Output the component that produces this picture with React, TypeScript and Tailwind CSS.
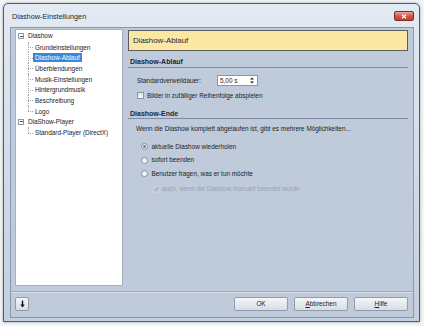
import React from 'react';

type TreeItem = {
  label: string;
  root?: boolean;
  selected?: boolean;
  line?: 'mid' | 'last' | 'none';
};

const treeItems: TreeItem[] = [
  { label: 'Diashow', root: true },
  { label: 'Grundeinstellungen', line: 'mid' },
  { label: 'Diashow-Ablauf', selected: true, line: 'mid' },
  { label: 'Überblendungen', line: 'mid' },
  { label: 'Musik-Einstellungen', line: 'mid' },
  { label: 'Hintergrundmusik', line: 'mid' },
  { label: 'Beschreibung', line: 'mid' },
  { label: 'Logo', line: 'last' },
  { label: 'DiaShow-Player', root: true },
  { label: 'Standard-Player (DirectX)', line: 'last' },
];

function TreeRow({ item }: { item: TreeItem }) {
  if (item.root) {
    return (
      <div className="relative flex h-[10.7px] items-center pl-[2px]">
        <span className="relative flex h-[6px] w-[6px] items-center justify-center border border-[#8f9aa8] bg-white">
          <span className="h-[1px] w-[3px] bg-[#3b4a5e]" />
        </span>
        <span className="ml-[4px] text-[6.4px] leading-[8px] text-[#1a1a1a]">{item.label}</span>
      </div>
    );
  }
  return (
    <div className="relative flex h-[10.7px] items-center pl-[17px]">
      <div
        className={
          item.line === 'last'
            ? 'absolute left-[12px] top-0 h-1/2 border-l border-dotted border-[#a2a2a2]'
            : 'absolute left-[12px] top-0 h-full border-l border-dotted border-[#a2a2a2]'
        }
      />
      <div className="absolute left-[12px] top-1/2 w-[5px] border-t border-dotted border-[#a2a2a2]" />
      <span
        className={
          item.selected
            ? 'bg-[#3c87d9] px-[2px] text-[6.4px] leading-[9px] text-white'
            : 'px-[2px] text-[6.4px] leading-[9px] text-[#1a1a1a]'
        }
      >
        {item.label}
      </span>
    </div>
  );
}

function Radio({ checked, label }: { checked?: boolean; label: string }) {
  return (
    <div className="flex h-[13.5px] items-center pl-[12.5px]">
      <span className="flex h-[7px] w-[7px] items-center justify-center rounded-full border border-[#8792a4] bg-linear-to-b from-[#e8ecf1] to-[#fbfcfd]">
        {checked ? <span className="h-[3px] w-[3px] rounded-full bg-[#5b76a0]" /> : null}
      </span>
      <span className="ml-[4px] text-[6.4px] leading-[8px] text-[#222]">{label}</span>
    </div>
  );
}

function Button({ children }: { children: React.ReactNode }) {
  return (
    <div className="flex h-[14px] w-[54px] items-center justify-center rounded-[2px] border border-[#8e9cb0] bg-linear-to-b from-[#f4f5f7] to-[#d9dde3] text-[6.4px] leading-[8px] text-[#1a1a1a]">
      {children}
    </div>
  );
}

export default function App() {
  return (
    <div className="h-[326px] w-[424px] bg-[#f4f5f7] pl-[3px] pt-[3px] font-['Liberation_Sans',Arial,sans-serif]">
      <div className="flex h-[319px] w-[417px] flex-col rounded-t-[5px] border border-[#4f5b6c] bg-linear-to-b from-[#e3eaf3] to-[#c3cfde] shadow-[0_0_3px_rgba(0,0,0,0.35)]">
        {/* title bar */}
        <div className="flex h-[23px] items-start">
          <span className="mt-[8px] pl-[8px] text-[7.3px] leading-[9px] text-[#1c2738]">Diashow-Einstellungen</span>
          <div className="ml-auto mr-[5px] mt-[7px] flex h-[10px] w-[20px] items-center justify-center rounded-[2px] border border-[#7b2b24] bg-linear-to-b from-[#e7a89c] via-[#cf5a4a] to-[#c2402f]">
            <svg width="6" height="5" viewBox="0 0 6 5">
              <path d="M1 0.8 L5 4.2 M5 0.8 L1 4.2" stroke="white" strokeWidth="1.3" />
            </svg>
          </div>
        </div>

        {/* content frame */}
        <div className="ml-[6px] flex h-[291px] w-[404px] flex-col border border-[#8a98ad] bg-[#bfcbdb]">
          <div className="flex pl-[4px] pt-[1px]">
            {/* tree */}
            <div className="h-[257px] w-[108px] border border-[#a7b2c0] bg-white pt-[1px]">
              {treeItems.map((item) => (
                <TreeRow key={item.label} item={item} />
              ))}
            </div>

            {/* right panel */}
            <div className="ml-[5px] w-[280px]">
              <div className="mt-[1px] flex h-[21px] items-center border border-[#5c5c5c] bg-[#fde8a3] pl-[4px]">
                <span className="text-[7.9px] leading-[10px] text-[#1d2533]">Diashow-Ablauf</span>
              </div>

              <div className="flex h-[16px] items-end pb-[1px] pl-[2px]">
                <span className="text-[7px] font-bold leading-[8px] text-[#1b2434]">Diashow-Ablauf</span>
              </div>
              <div className="h-[1px] bg-[#7f8ea5]" />

              <div className="mt-[7px] flex h-[11px] items-center pl-[9px]">
                <span className="w-[80px] text-[6.4px] leading-[8px] text-[#222]">Standardverweildauer:</span>
                <div className="flex h-[11px] w-[41px] items-center justify-between border border-[#8997ab] bg-white pl-[2px] pr-[3px]">
                  <span className="text-[6.4px] leading-[8px] text-[#1a1a1a]">5,00 s</span>
                  <svg width="4" height="7" viewBox="0 0 4 7">
                    <path d="M0 2.6 L2 0.4 L4 2.6 Z M0 4.4 L2 6.6 L4 4.4 Z" fill="#222" />
                  </svg>
                </div>
              </div>

              <div className="mt-[5px] flex h-[9px] items-center pl-[9px]">
                <span className="h-[7px] w-[7px] border border-[#8a93a2] bg-linear-to-b from-[#dfe3e9] to-[#f9fafb]" />
                <span className="ml-[3px] text-[6.4px] leading-[8px] text-[#222]">
                  Bilder in zufälliger Reihenfolge abspielen
                </span>
              </div>

              <div className="flex h-[18px] items-end pl-[2px]">
                <span className="text-[7px] font-bold leading-[8px] text-[#1b2434]">Diashow-Ende</span>
              </div>
              <div className="h-[1px] bg-[#7f8ea5]" />

              <div className="flex h-[20px] items-center pl-[8px]">
                <span className="text-[6.4px] leading-[8px] text-[#222]">
                  Wenn die Diashow komplett abgelaufen ist, gibt es mehrere Möglichkeiten...
                </span>
              </div>

              <div className="pt-[1px]">
                <Radio checked label="aktuelle Diashow wiederholen" />
                <Radio label="sofort beenden" />
                <Radio label="Benutzer fragen, was er tun möchte" />
                <div className="mt-[1.5px] flex h-[14px] items-center pl-[24.5px]">
                  <span className="flex h-[7px] w-[7px] items-center justify-center border border-[#c9d1dc]">
                    <svg width="6" height="6" viewBox="0 0 6 6">
                      <path d="M0.6 3.2 L2.3 5 L5.4 0.8" stroke="#98a2b0" strokeWidth="1.2" fill="none" />
                    </svg>
                  </span>
                  <span className="ml-[2.5px] text-[6.4px] leading-[8px] text-[#98a2b1]">
                    auch, wenn die Diashow manuell beendet wurde
                  </span>
                </div>
              </div>
            </div>
          </div>

          {/* separator */}
          <div className="mt-[5px] h-[1px] bg-[#9dabbf] shadow-[0_1px_0_#d6deea]" />

          {/* bottom buttons */}
          <div className="mt-[5px] flex items-center pl-[4px] pr-[5px]">
            <div className="flex h-[14px] w-[14px] items-center justify-center rounded-[2px] border border-[#8e9cb0] bg-linear-to-b from-[#f4f5f7] to-[#d9dde3]">
              <svg width="5" height="8" viewBox="0 0 5 8">
                <path d="M2.5 0.5 V5" stroke="#111" strokeWidth="1.4" />
                <path d="M0.3 4.4 L2.5 7.6 L4.7 4.4 Z" fill="#111" />
              </svg>
            </div>
            <div className="ml-auto flex gap-[6px]">
              <Button>OK</Button>
              <Button>
                <span className="underline">A</span>bbrechen
              </Button>
              <Button>
                <span className="underline">H</span>ilfe
              </Button>
            </div>
          </div>
        </div>
      </div>
    </div>
  );
}
